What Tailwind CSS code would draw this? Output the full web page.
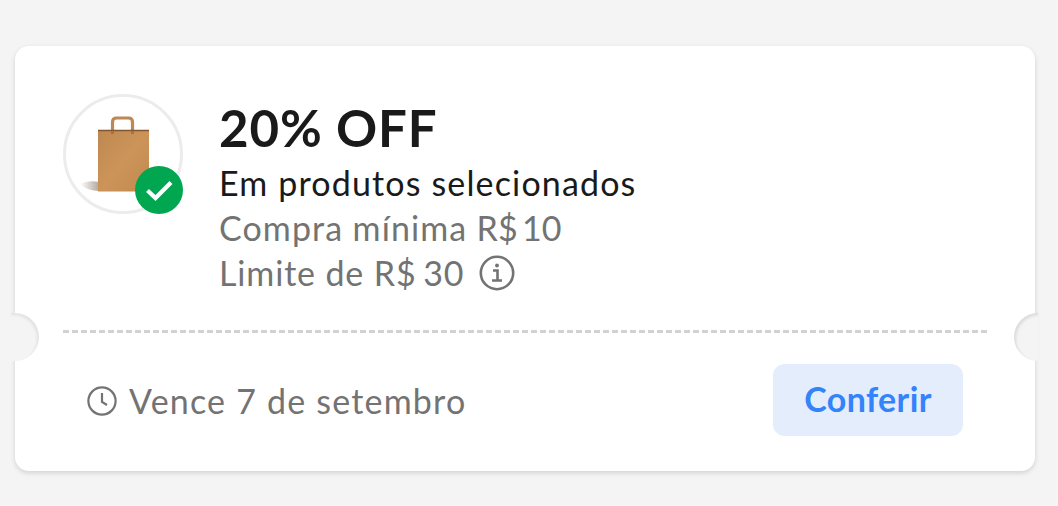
<!DOCTYPE html>
<html lang="pt-BR">
<head>
<meta charset="utf-8">
<title>Cupom</title>
<script src="https://cdn.jsdelivr.net/npm/@tailwindcss/browser@4"></script>
</head>
<body class="h-[506px] overflow-hidden bg-[#f4f4f4] pt-[46px] pl-[15px] font-['Lato','Open_Sans',sans-serif] text-[34px] text-[#737373]">
<main class="relative flex h-[425px] w-[1020px] flex-col rounded-[14px] bg-white shadow-[0_2px_5px_rgba(0,0,0,0.14)]">
  <section class="flex h-[284px] gap-[36px] pt-12 pl-12">
    <div class="relative size-[120px] shrink-0 rounded-full border-[3px] border-[#ececec]">
      <svg class="absolute -top-[3px] -left-[3px]" width="120" height="120" viewBox="0 0 120 120">
        <defs>
          <linearGradient id="paper" x1="0" y1="0" x2="1" y2="1"><stop offset="0" stop-color="#bd8850"/><stop offset=".5" stop-color="#cc9459"/><stop offset="1" stop-color="#c18a4f"/></linearGradient>
          <linearGradient id="shade"><stop offset="0" stop-color="#fff"/><stop offset="1" stop-color="#b3a79e"/></linearGradient>
        </defs>
        <path d="M17 90q8-4 19-2v9q-12 0-19-7z" fill="url(#shade)"/>
        <path d="M49.500 37v-9q0-4 4-4h12q4 0 4 4v9" fill="none" stroke="#bd8854" stroke-width="3.200"/>
        <path d="M35 36h51v61.500H35z" fill="url(#paper)"/>
        <path d="M35 36.500h51" stroke="#84562e" stroke-width="1.300"/>
        <path d="M49.500 37v3M69.500 37v3" stroke="#a9733f" stroke-width="3"/>
      </svg>
      <svg class="absolute top-[69px] left-[69px]" width="48" height="48" viewBox="0 0 48 48">
        <circle cx="24" cy="24" r="24" fill="#00a650"/>
        <path d="M12.500 24.500l8 7.500L36 16.500" fill="none" stroke="#fff" stroke-width="4.200"/>
      </svg>
    </div>
    <div class="flex flex-col whitespace-nowrap leading-[45px]">
      <h1 class="mt-[3px] h-[63px] text-[51px] leading-[62px] font-bold tracking-[0.9px] text-[#1a1a1a]">20% OFF</h1>
      <p class="tracking-[1.15px] text-[#1a1a1a]">Em produtos selecionados</p>
      <p><span class="tracking-[1.1px] [word-spacing:-0.5px]">Compra mínima </span><span class="[word-spacing:-5px] tracking-[0.2px]">R$ 10</span></p>
      <p class="flex items-center gap-[15px]"><span><span class="tracking-[0.85px]">Limite de </span><span class="tracking-[0.9px] [word-spacing:-3px]">R$ 30</span></span>
        <svg width="36" height="36" viewBox="0 0 36 36" fill="none" stroke="#737373"><circle cx="18" cy="18" r="16.200" stroke-width="2.600"/><path d="M14 15.500h4.500v9.500M13 25.500h10" stroke-width="2.600"/><circle cx="18" cy="10.500" r="1.900" fill="#737373" stroke="none"/></svg>
      </p>
    </div>
  </section>
  <div class="mx-12 h-[3px] shrink-0 bg-[repeating-linear-gradient(90deg,#d2d2d2_0_6px,transparent_6px_9px)]"></div>
  <section class="flex h-[134px] items-center justify-between pr-[72px] pl-[72px]">
    <div class="flex items-center gap-3 whitespace-nowrap">
      <svg class="mt-px" width="30" height="30" viewBox="0 0 30 30" fill="none" stroke="#737373" stroke-width="2.200"><circle cx="15" cy="15" r="13.600"/><path d="M15 7v9l5 3"/></svg>
      <span class="tracking-[1.2px]">Vence 7 de setembro</span>
    </div>
    <button class="h-[72px] w-[190px] rounded-[12px] bg-[#e3edfb] pb-[3px] font-bold tracking-[0.4px] text-[#3483fa]">Conferir</button>
  </section>
  <div class="absolute top-[267px] -left-[4px] h-12 w-[28px] rounded-r-full bg-[#f4f4f4] shadow-[inset_-2px_2px_3px_rgba(0,0,0,0.07)]"></div>
  <div class="absolute top-[267px] left-[999px] h-12 w-6 rounded-l-full bg-[#f4f4f4] shadow-[inset_2px_2px_3px_rgba(0,0,0,0.10)]"></div>
</main>
</body>
</html>
